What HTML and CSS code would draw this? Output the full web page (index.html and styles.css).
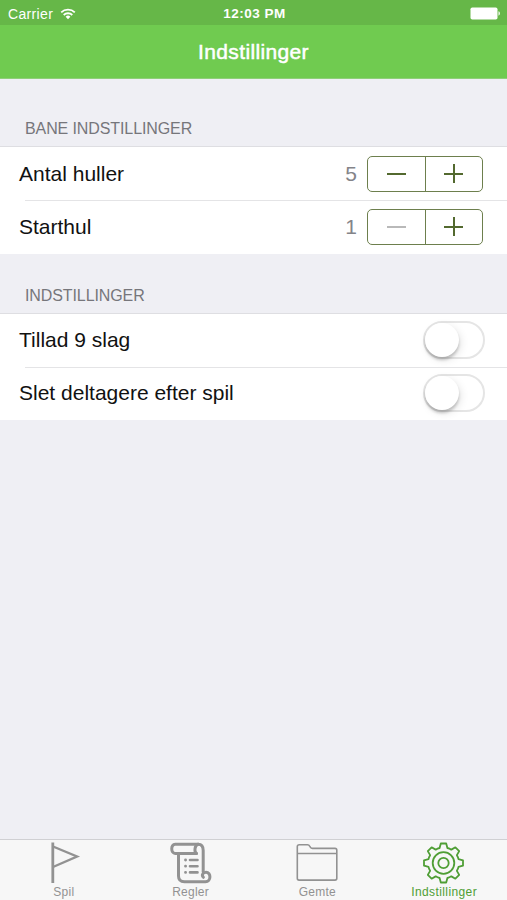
FILE: index.html
```html
<!DOCTYPE html>
<html lang="da">
<head>
    <meta charset="UTF-8">
    <meta name="viewport" content="width=device-width, initial-scale=1.0">
    <title>Indstillinger</title>
    <link rel="stylesheet" href="styles.css">
</head>
<body>
    <div class="status-bar">
        <div class="carrier">
            <span>Carrier</span>
            <svg class="wifi" width="16" height="12" viewBox="0 0 16 12">
                <path d="M1.2 4.4a9.8 9.8 0 0 1 13.6 0M3.7 7a6.2 6.2 0 0 1 8.6 0" fill="none" stroke="#fff" stroke-width="1.8"/>
                <path d="M5.6 8.7a3.4 3.4 0 0 1 4.8 0L8 11.3z" fill="#fff"/>
            </svg>
        </div>
        <span class="time">12:03 PM</span>
        <div class="battery">
            <svg width="31" height="13" viewBox="0 0 31 13">
                <rect x="0.5" y="0.5" width="27" height="12" rx="1.8" fill="#fff"/>
                <path d="M28.5 4.3c1.8.6 1.8 3.8 0 4.4z" fill="#fff"/>
            </svg>
        </div>
    </div>
    <header class="nav-bar">
        <h1>Indstillinger</h1>
    </header>

    <main>
        <!-- Course settings -->
        <h2 class="section-title first">BANE INDSTILLINGER</h2>
        <div class="group">
            <div class="row">
                <span class="label">Antal huller</span>
                <span class="value">5</span>
                <div class="stepper">
                    <button type="button" class="minus" aria-label="Minus"></button>
                    <button type="button" class="plus" aria-label="Plus"></button>
                </div>
            </div>
            <div class="row">
                <span class="label">Starthul</span>
                <span class="value">1</span>
                <div class="stepper">
                    <button type="button" class="minus" aria-label="Minus" disabled></button>
                    <button type="button" class="plus" aria-label="Plus"></button>
                </div>
            </div>
        </div>

        <!-- General settings -->
        <h2 class="section-title">INDSTILLINGER</h2>
        <div class="group">
            <div class="row">
                <span class="label">Tillad 9 slag</span>
                <div class="switch"><div class="knob"></div></div>
            </div>
            <div class="row">
                <span class="label">Slet deltagere efter spil</span>
                <div class="switch"><div class="knob"></div></div>
            </div>
        </div>
    </main>

    <nav class="tab-bar">
        <a class="tab">
            <svg width="44" height="44" viewBox="0 0 44 44" fill="none" stroke="#929292">
                <path d="M10.8 1.500v40.500" stroke-width="2.800"/>
                <path d="M11 5.500l24 10L11 26" stroke-width="2.400"/>
            </svg>
            <span>Spil</span>
        </a>
        <a class="tab">
            <svg width="44" height="44" viewBox="0 0 44 44" fill="none" stroke="#929292" stroke-width="3" stroke-linecap="round" stroke-linejoin="round">
                <path d="M27.500 12.500H6.200c-4.600 0-4.600-9.300 0-9.300h23c4.200 0 5 3 5 6.300V31"/>
                <path d="M29.200 3.200c-4 1.500-4 7.700-1.700 9.300"/>
                <path d="M9.500 13v22c0 4 2.200 5.700 6 5.700h21c5.800 0 5.800-9.400.5-9.400-3.400 0-4.600 3-2.600 5"/>
                <path d="M16.500 19h.1M16.500 25.200h.1M16.500 31.400h.1" stroke-width="2.800"/>
                <path d="M21 19h7.500M21 25.200h7.500M21 31.400h7.500" stroke-width="2.600"/>
            </svg>
            <span>Regler</span>
        </a>
        <a class="tab">
            <svg width="44" height="44" viewBox="0 0 44 44" fill="none" stroke="#929292" stroke-width="1.600" stroke-linejoin="round">
                <path d="M2.300 37.300V5.500q0-1.700 2-1.700h8.200q1.500 0 2.200 1.300l.8 1.300q.6 1 2 1H40q1.800 0 1.800 1.800V37.300q0 1.800-1.800 1.800H4.100q-1.800 0-1.800-1.800z"/>
                <path d="M2.300 12.500h39.500"/>
            </svg>
            <span>Gemte</span>
        </a>
        <a class="tab active">
            <svg width="44" height="44" viewBox="-21.500 -22 44 44" fill="none" stroke="#4f9e35" stroke-width="1.800" stroke-linejoin="round">
                <path d="M-2.700-19.500H2.700L3.900-15Q6-14.600 7.850-13.360L11.880-15.700 15.700-11.880 13.360-7.850Q14.600-6 15-3.900L19.500-2.700V2.700L15 3.900Q14.600 6 13.360 7.850L15.700 11.880 11.880 15.700 7.850 13.360Q6 14.600 3.900 15L2.700 19.500H-2.700L-3.900 15Q-6 14.600-7.850 13.360L-11.880 15.700-15.700 11.880-13.360 7.850Q-14.600 6-15 3.900L-19.500 2.700V-2.700L-15-3.900Q-14.600-6-13.360-7.850L-15.700-11.880-11.880-15.700-7.850-13.360Q-6-14.600-3.900-15z"/>
                <circle r="10.800"/>
                <circle r="5.200"/>
            </svg>
            <span>Indstillinger</span>
        </a>
    </nav>
</body>
</html>
```
FILE: styles.css
```css
* {
    box-sizing: border-box;
    margin: 0;
    padding: 0;
}

body {
    display: flex;
    flex-direction: column;
    height: 100vh;
    overflow: hidden;
    background: #efeff4;
    color: #111;
    font-family: "Liberation Sans", Arial, sans-serif;
}

.status-bar {
    display: grid;
    grid-template-columns: 1fr auto 1fr;
    align-items: center;
    height: 25px;
    padding: 2px 6px 0 8px;
    background: #66b748;
    color: #fff;
    font-size: 14px;
}

.carrier {
    display: flex;
    align-items: center;
    gap: 7px;
    letter-spacing: 0.35px;
}

.time {
    font-weight: bold;
    font-size: 13.5px;
    letter-spacing: 0.5px;
}

.battery {
    display: flex;
    justify-content: flex-end;
}

.nav-bar {
    height: 54px;
    background: #70cb50;
    border-bottom: 1px solid #8fcf79;
    color: #fff;
    text-align: center;
}

.nav-bar h1 {
    font-size: 21px;
    line-height: 54px;
    font-weight: normal;
    -webkit-text-stroke: 0.5px #fff;
    letter-spacing: 0.35px;
}

main {
    flex: 1;
}

.section-title {
    height: 60px;
    padding: 33px 25px 0;
    color: #76767b;
    font-size: 16px;
    font-weight: normal;
    line-height: 18px;
    letter-spacing: -0.1px;
}

.section-title.first {
    height: 68px;
    padding-top: 41px;
}

.group {
    background: #fff;
    box-shadow: 0 -1px 0 #dedee2;
}

.row {
    display: flex;
    align-items: center;
    height: 53px;
    padding: 0 24px 0 19px;
}

.row + .row {
    height: 53.5px;
    background: linear-gradient(#e4e4e6, #e4e4e6) 25px 0 / 100% 1px no-repeat;
}

.label {
    flex: 1;
    font-size: 21px;
    line-height: 24px;
}

.value {
    margin-right: 10px;
    color: #848489;
    font-size: 21px;
}

.stepper {
    display: flex;
    width: 116px;
    height: 36px;
    border: 1.5px solid #6d7f4d;
    border-radius: 5px;
}

.stepper button {
    flex: 1;
    border: none;
    background: linear-gradient(#53692f, #53692f) center / 19px 2px no-repeat;
}

.stepper .plus {
    border-left: 1.5px solid #6d7f4d;
    background:
        linear-gradient(#53692f, #53692f) center / 19px 2px no-repeat,
        linear-gradient(#53692f, #53692f) center / 2px 19px no-repeat;
}

.stepper button:disabled {
    background: linear-gradient(#b9b9b9, #b9b9b9) center / 19px 2px no-repeat;
}

.switch {
    width: 62px;
    height: 38px;
    margin-right: -2px;
    border: 2px solid #e5e5e5;
    border-radius: 19px;
}

.knob {
    width: 34px;
    height: 34px;
    border-radius: 50%;
    background: #fff;
    box-shadow: 0 3px 3px rgba(0, 0, 0, 0.2), 2px 3px 9px rgba(0, 0, 0, 0.1);
}

.tab-bar {
    display: flex;
    height: 61px;
    border-top: 1px solid #d0d0d3;
    background: #f7f7f7;
}

.tab {
    flex: 1;
    display: flex;
    flex-direction: column;
    align-items: center;
    padding: 1px 0 0 1px;
    color: #929292;
    font-size: 12px;
    line-height: 14px;
    letter-spacing: 0.25px;
}

.tab.active {
    color: #4f9e35;
    letter-spacing: 0.4px;
}
```
